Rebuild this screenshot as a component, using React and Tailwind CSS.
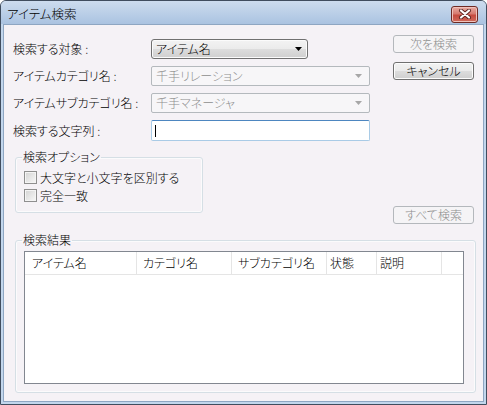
import React from 'react';

const font = "font-['Noto_Sans_CJK_JP','Noto_Sans',sans-serif] [font-feature-settings:'palt'] font-light";

const Label = ({ children }) => (
  <div className="w-[138px] shrink-0 leading-[20px] whitespace-nowrap">{children}</div>
);

const DisabledCombo = ({ value }) => (
  <div className="w-[219px] h-[20px] flex items-center pl-[4px] pr-[7px] border border-[#b4b9bd] rounded-[2px] bg-[#f7f6f8] text-[#8e8e8e]">
    <span className="leading-[18px]">{value}</span>
    <svg className="ml-auto" width="7" height="4" viewBox="0 0 7 4">
      <path d="M0 0 H7 L3.5 4 Z" fill="#a7a7a7" />
    </svg>
  </div>
);

const Button = ({ children, disabled }) =>
  disabled ? (
    <div className="w-[81px] h-[18px] flex items-center justify-center border border-[#b4b8bc] rounded-[3px] bg-[#f5f4f6] text-[#8c8c8c] leading-[16px]">
      {children}
    </div>
  ) : (
    <div className="w-[81px] h-[18px] flex items-center justify-center border border-[#707070] rounded-[3px] bg-[linear-gradient(#f2f2f2_0%,#ebebeb_50%,#dddddd_51%,#cfcfcf_100%)] shadow-[inset_0_0_0_1px_#fcfcfc] leading-[16px]">
      {children}
    </div>
  );

const CheckBox = ({ label }) => (
  <div className="flex items-center h-[13px] gap-[3px]">
    <div className="w-[13px] h-[13px] border border-[#8f8f8f] bg-[linear-gradient(135deg,#d3d3d3,#f8f8f8)] shadow-[inset_0_0_0_1px_#f4f4f4]" />
    <span className="leading-[13px] whitespace-nowrap">{label}</span>
  </div>
);

const columns = [
  { name: 'アイテム名', w: 'w-[112px] pl-[7px]' },
  { name: 'カテゴリ名', w: 'w-[95px] pl-[6px]' },
  { name: 'サブカテゴリ名', w: 'w-[95px] pl-[6px]' },
  { name: '状態', w: 'w-[50px] pl-[3px]' },
  { name: '説明', w: 'w-[65px] pl-[3px]' },
];

export default function App() {
  return (
    <div className={`w-[487px] h-[405px] flex flex-col bg-[#c2d6ec] border border-[#404d5e] rounded-t-[6px] overflow-hidden text-[12px] text-black ${font}`}>
      {/* title bar */}
      <div className="h-[23px] shrink-0 flex items-center pl-[6px] pr-[8px] bg-[linear-gradient(#cddcee,#aac3e1)]">
        <span className="text-[12.5px] leading-[16px] mt-[2px]">アイテム検索</span>
        <div className="ml-auto mt-[3px] w-[27px] h-[17px] flex items-center justify-center border border-[#6e2a24] rounded-[3px] bg-[linear-gradient(#e8aca4_0%,#d67a6f_45%,#c64b3f_55%,#cf6a5c_100%)] shadow-[inset_0_0_0_1px_#f0c2bb]">
          <svg width="14" height="10" viewBox="0 0 14 10">
            <path d="M3 1.5 L11 8.5 M11 1.5 L3 8.5" stroke="#5a2520" strokeWidth="4" strokeLinecap="round" />
            <path d="M3 1.5 L11 8.5 M11 1.5 L3 8.5" stroke="#ffffff" strokeWidth="2.2" strokeLinecap="round" />
          </svg>
        </div>
      </div>

      {/* client area */}
      <div className="flex-1 mx-[2px] mb-[2px] border border-[#8ea6c2] bg-[#f5f2f6] flex flex-col pl-[9px] pr-[9px]">
        {/* top form */}
        <div className="flex items-start pt-[10px]">
          <div className="flex flex-col gap-[7px] mt-[4px]">
            <div className="flex items-center h-[20px]">
              <Label>検索する対象 :</Label>
              <div className="w-[157px] h-[20px] flex items-center pl-[4px] pr-[5px] border border-[#707070] rounded-[3px] bg-[linear-gradient(#f3f3f3_0%,#ebebeb_50%,#dddddd_51%,#cfcfcf_100%)] shadow-[inset_0_0_0_1px_#fbfbfb]">
                <span className="leading-[18px]">アイテム名</span>
                <svg className="ml-auto" width="7" height="4" viewBox="0 0 7 4">
                  <path d="M0 0 H7 L3.5 4 Z" fill="#000" />
                </svg>
              </div>
            </div>
            <div className="flex items-center h-[20px]">
              <Label>アイテムカテゴリ名 :</Label>
              <DisabledCombo value="千手リレーション" />
            </div>
            <div className="flex items-center h-[20px]">
              <Label>アイテムサブカテゴリ名 :</Label>
              <DisabledCombo value="千手マネージャ" />
            </div>
            <div className="flex items-center h-[21px]">
              <Label>検索する文字列 :</Label>
              <div className="w-[219px] h-[21px] flex items-center pl-[3px] border border-[#a9cbe6] border-t-[#4d86c0] rounded-[2px] bg-white">
                <div className="w-[1px] h-[12px] bg-black" />
              </div>
            </div>
          </div>
          <div className="ml-[23px] flex flex-col gap-[9px]">
            <Button disabled>次を検索</Button>
            <Button>キャンセル</Button>
          </div>
        </div>

        {/* options */}
        <div className="flex items-start mt-[8px]">
          <fieldset className="ml-[2px] w-[188px] h-[64px] border border-[#d5dfe5] rounded-[3px] shadow-[inset_0_0_0_1px_#fbfbfc]">
            <legend className="ml-[6px] px-[1px] leading-[16px]">検索オプション</legend>
            <div className="flex flex-col gap-[5px] pl-[8px] pt-[6px]">
              <CheckBox label="大文字と小文字を区別する" />
              <CheckBox label="完全一致" />
            </div>
          </fieldset>
          <div className="ml-auto mt-[57px]">
            <Button disabled>すべて検索</Button>
          </div>
        </div>

        {/* results */}
        <fieldset className="mt-[8px] ml-[2px] w-[461px] border border-[#d5dfe5] rounded-[3px] shadow-[inset_0_0_0_1px_#fbfbfc]">
          <legend className="ml-[6px] px-[1px] leading-[16px]">検索結果</legend>
          <div className="pl-[8px] pt-[3px] pb-[8px]">
            <div className="w-[440px] h-[133px] border border-[#828790] bg-white flex flex-col">
              <div className="h-[23px] flex border-b border-[#e5e5e5]">
                {columns.map((c) => (
                  <div key={c.name} className={`${c.w} h-full flex items-center border-r border-[#e5e5e5] whitespace-nowrap`}>
                    {c.name}
                  </div>
                ))}
                <div className="flex-1" />
              </div>
            </div>
          </div>
        </fieldset>
      </div>
    </div>
  );
}
